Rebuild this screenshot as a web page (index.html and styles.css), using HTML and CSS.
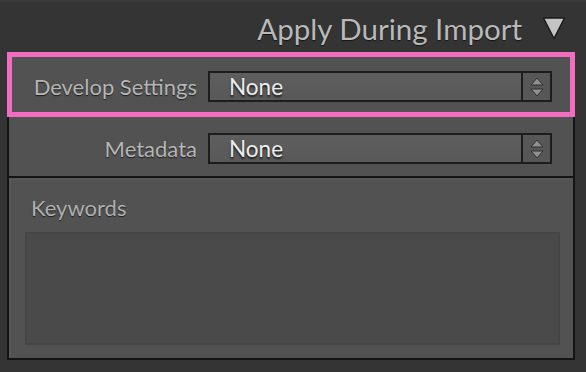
FILE: index.html
```html
<!DOCTYPE html>
<html lang="en">
	<head>
		<meta charset="UTF-8" />
		<title>Apply During Import</title>
		<link rel="stylesheet" href="styles.css">
	</head>
	<body>
		<div class="header">
			<span class="header-title">Apply During Import</span>
			<svg class="header-arrow" width="24" height="24" viewBox="0 0 24 24">
				<path d="M1.5 2 L22.5 2 L12 22.5 Z" fill="#c4c4c4" stroke="#1a1a1a" stroke-width="1.5" stroke-linejoin="round" />
			</svg>
		</div>

		<div class="panel">
			<!-- Ligne mise en évidence -->
			<div class="row row-highlight">
				<span class="row-label">Develop Settings</span>
				<div class="select">
					<span class="select-value">None</span>
					<span class="select-stepper">
						<svg width="16" height="22" viewBox="0 0 16 22">
							<path d="M8 2 L14 9 L2 9 Z" fill="#909090" stroke="#2e2e2e" stroke-width="1" />
							<path d="M2 13 L14 13 L8 20 Z" fill="#909090" stroke="#2e2e2e" stroke-width="1" />
						</svg>
					</span>
				</div>
			</div>

			<div class="box">
				<div class="row row-meta">
					<span class="row-label">Metadata</span>
					<div class="select">
						<span class="select-value">None</span>
						<span class="select-stepper">
							<svg width="16" height="22" viewBox="0 0 16 22">
								<path d="M8 2 L14 9 L2 9 Z" fill="#909090" stroke="#2e2e2e" stroke-width="1" />
								<path d="M2 13 L14 13 L8 20 Z" fill="#909090" stroke="#2e2e2e" stroke-width="1" />
							</svg>
						</span>
					</div>
				</div>

				<div class="keywords">
					<div class="keywords-label">Keywords</div>
					<div class="keywords-field"></div>
				</div>
			</div>
		</div>
	</body>
</html>
```

FILE: styles.css
```css
body {
	margin: 0;
	height: 372px;
	overflow: hidden;
	background: #343434;
	font-family: Lato, "Open Sans", sans-serif;
	border-top: 2px solid #3b3b3b;
	box-sizing: border-box;
}

/* EN-TETE */
.header {
	height: 50px;
	display: flex;
	align-items: center;
	justify-content: flex-end;
	gap: 20px;
	padding-right: 20px;
}

.header-title {
	font-size: 29.5px;
	color: #b9b9b9;
	text-shadow: 0 1px 1px #151515;
	margin-top: 2px;
}

.header-arrow {
	display: block;
	margin-top: 2px;
}

/* PANNEAU */
.panel {
	margin-left: 7px;
	width: 568px;
}

.row {
	display: flex;
	align-items: center;
	gap: 11px;
	background: #525252;
}

.row-label {
	font-size: 22px;
	color: #b6b6b6;
	text-align: right;
	text-shadow: 0 1px 1px #1e1e1e;
}

.row-highlight {
	border: 5px solid #f26cc2;
	padding: 4px 0 0;
	box-sizing: content-box;
	height: 51px;
}

.row-highlight .row-label {
	width: 185px;
}

.box {
	border: 2px solid #141414;
	border-top: 0;
	background: #525252;
}

.row-meta {
	height: 59px;
	padding-top: 4px;
	box-sizing: border-box;
}

.row-meta .row-label {
	width: 188px;
}

.select {
	width: 344px;
	height: 31px;
	box-sizing: border-box;
	border: 2px solid #1d1d1d;
	background: linear-gradient(#5e5e5e, #595959);
	display: flex;
	align-items: center;
}

.select-value {
	flex: 1;
	padding-left: 19px;
	font-size: 22.5px;
	color: #ececec;
	text-shadow: 0 2px 2px #1a1a1a;
}

.select-stepper {
	width: 27px;
	height: 100%;
	border-left: 2px solid #1d1d1d;
	background: #575757;
	display: flex;
	align-items: center;
	justify-content: center;
}

.select-stepper svg {
	display: block;
}

.keywords {
	border-top: 2px solid #141414;
	height: 182px;
	padding: 17px 13px 13px 16px;
	box-sizing: border-box;
	display: flex;
	flex-direction: column;
	background: #525252;
	box-shadow: inset 2px 2px 0 #575757;
}

.keywords-label {
	font-size: 22px;
	line-height: 26px;
	color: #b0b0b0;
	margin-left: 6px;
	text-shadow: 0 1px 1px #1e1e1e;
}

.keywords-field {
	flex: 1;
	margin-top: 11px;
	background: #4a4a4a;
	border: 2px solid #454545;
}
```
